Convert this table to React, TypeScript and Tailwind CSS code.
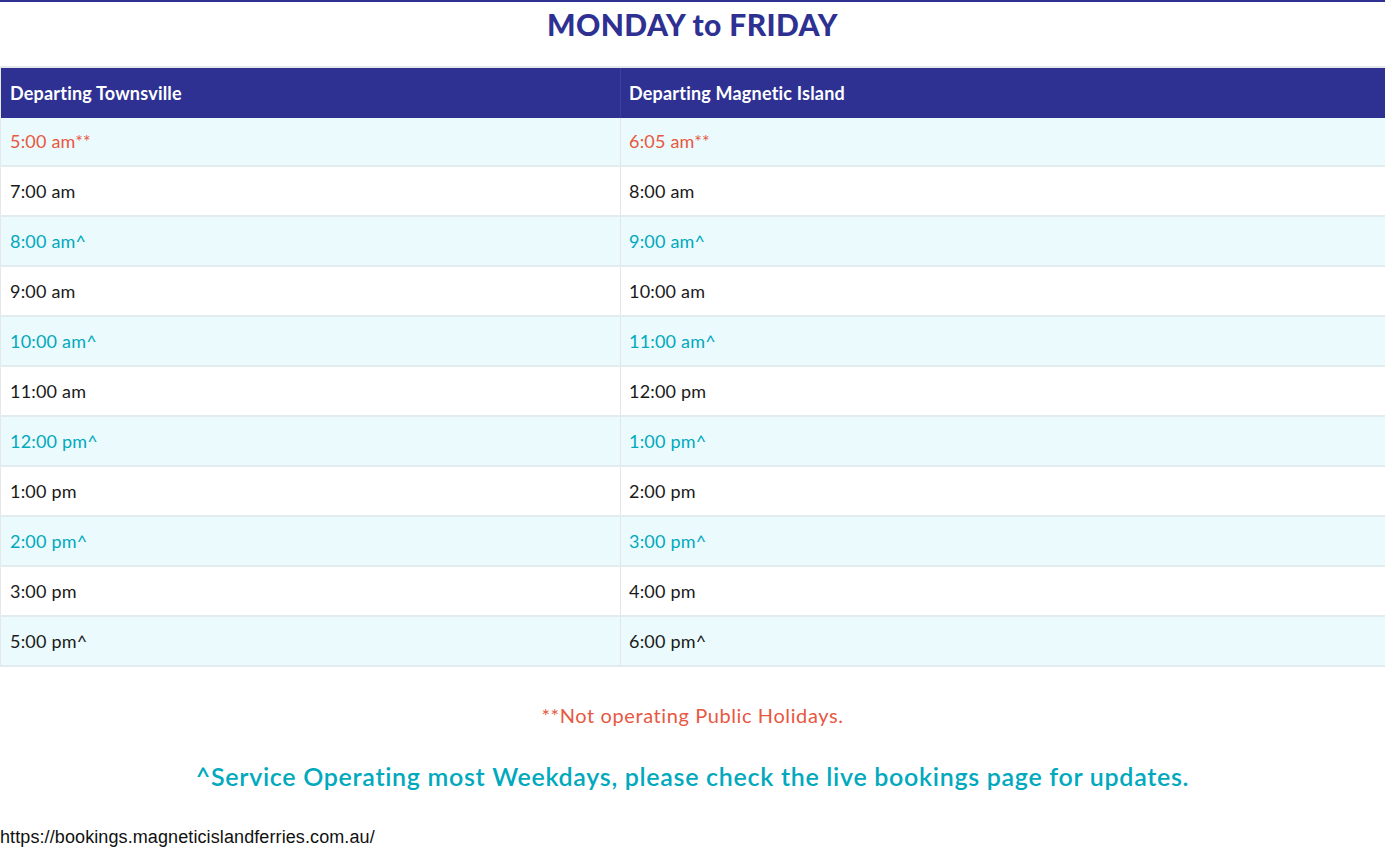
const rows: { t: string; m: string; tone: "red" | "teal" | "dark" }[] = [
  { t: "5:00 am**", m: "6:05 am**", tone: "red" },
  { t: "7:00 am", m: "8:00 am", tone: "dark" },
  { t: "8:00 am^", m: "9:00 am^", tone: "teal" },
  { t: "9:00 am", m: "10:00 am", tone: "dark" },
  { t: "10:00 am^", m: "11:00 am^", tone: "teal" },
  { t: "11:00 am", m: "12:00 pm", tone: "dark" },
  { t: "12:00 pm^", m: "1:00 pm^", tone: "teal" },
  { t: "1:00 pm", m: "2:00 pm", tone: "dark" },
  { t: "2:00 pm^", m: "3:00 pm^", tone: "teal" },
  { t: "3:00 pm", m: "4:00 pm", tone: "dark" },
  { t: "5:00 pm^", m: "6:00 pm^", tone: "dark" },
];

const toneClass = {
  red: "text-[#e8573f]",
  teal: "text-[#00a9bd]",
  dark: "text-[#1a1a1a]",
};

export default function App() {
  return (
    <div className="min-h-screen bg-white font-['Lato',sans-serif]">
      <div className="border-t-2 border-[#2e3192]">
        <h1 className="pt-[4px] pb-[24px] text-center text-[30px] font-black leading-[36px] tracking-[0.4px] text-[#2e3192]">
          MONDAY to FRIDAY
        </h1>

        {/* Timetable */}
        <table className="w-full border-collapse border-t-2 border-l border-[#e4e8ea] text-[18px] tracking-[0.2px]">
          <thead>
            <tr className="h-[51px] bg-[#2e3192] text-white">
              <th className="w-[620px] border-r border-[#3c3f9c] pl-[9px] text-left font-bold">Departing Townsville</th>
              <th className="pl-[8px] text-left font-bold">Departing Magnetic Island</th>
            </tr>
          </thead>
          <tbody>
            {rows.map((r, i) => (
              <tr
                key={i}
                className={`${i === 0 ? "h-[48px]" : "h-[50px]"} border-b-2 border-[#e2ecee] ${i % 2 === 0 ? "bg-[#ebfafc]" : "bg-white"} ${toneClass[r.tone]}`}
              >
                <td className="border-r border-[#e2e6e8] pl-[9px]">{r.t}</td>
                <td className="pl-[8px]">{r.m}</td>
              </tr>
            ))}
          </tbody>
        </table>

        <p className="mt-[34px] text-center text-[20px] leading-[28px] tracking-[0.6px] text-[#e8573f]">
          **Not operating Public Holidays.
        </p>
        <p className="mt-[31px] text-center text-[25px] font-semibold leading-[32px] tracking-[0.7px] text-[#00a9bd]">
          ^Service Operating most Weekdays, please check the live bookings page for updates.
        </p>
        <p className="mt-[33px] font-['Liberation_Sans',sans-serif] text-[18px] leading-[24px] tracking-[0.1px] text-[#111]">
          https://bookings.magneticislandferries.com.au/
        </p>
      </div>
    </div>
  );
}
